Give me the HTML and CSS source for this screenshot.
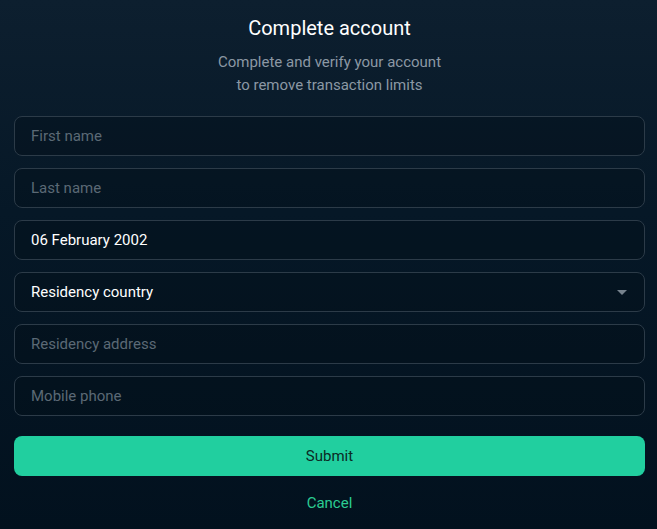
FILE: index.html
```html
<!DOCTYPE html>
<html lang="en">
<head>
<meta charset="utf-8">
<title>Complete account</title>
<link rel="stylesheet" href="styles.css">
</head>
<body>
<div class="page">
  <h1 class="title">Complete account</h1>
  <p class="subtitle">Complete and verify your account<br>to remove transaction limits</p>
  <form class="form">
    <div class="field"><span class="placeholder">First name</span></div>
    <div class="field"><span class="placeholder">Last name</span></div>
    <div class="field"><span class="value">06 February 2002</span></div>
    <div class="field select"><span class="value">Residency country</span><span class="caret"></span></div>
    <div class="field"><span class="placeholder">Residency address</span></div>
    <div class="field"><span class="placeholder">Mobile phone</span></div>
    <div class="submit">Submit</div>
    <div class="cancel">Cancel</div>
  </form>
</div>
</body>
</html>
```
FILE: styles.css
```css
html, body {
  margin: 0;
  padding: 0;
  height: 100%;
}
body {
  background: linear-gradient(180deg, #0d1f2f 0%, #061827 40%, #02111e 100%);
  font-family: Roboto, "Noto Sans", sans-serif;
  color: #fff;
}
.page {
  padding: 14px 12px 0 14px;
  display: flex;
  flex-direction: column;
}
.title {
  margin: 0;
  font-size: 20px;
  font-weight: 400;
  text-align: center;
  line-height: 28px;
  color: #fff;
}
.subtitle {
  margin: 9px 0 0;
  font-size: 15px;
  line-height: 23px;
  text-align: center;
  color: #8b98a4;
}
.form {
  margin-top: 19px;
  display: flex;
  flex-direction: column;
  gap: 12px;
}
.field {
  height: 40px;
  box-sizing: border-box;
  border: 1px solid #2c3b48;
  border-radius: 8px;
  padding: 0 16px;
  display: flex;
  align-items: center;
  justify-content: space-between;
  font-size: 15px;
  background: rgba(2, 14, 24, 0.35);
}
.placeholder { color: #5b6975; }
.value { color: #ffffff; }
.caret {
  width: 0;
  height: 0;
  border-left: 5px solid transparent;
  border-right: 5px solid transparent;
  border-top: 5px solid #76828d;
  margin-right: 1px;
}
.submit {
  margin-top: 8px;
  height: 40px;
  border-radius: 8px;
  background: #21cf9f;
  color: #0b2a24;
  display: flex;
  align-items: center;
  justify-content: center;
  font-size: 15px;
}
.cancel {
  margin-top: 1px;
  text-align: center;
  color: #2bcc93;
  font-size: 15px;
  line-height: 28px;
}
```
